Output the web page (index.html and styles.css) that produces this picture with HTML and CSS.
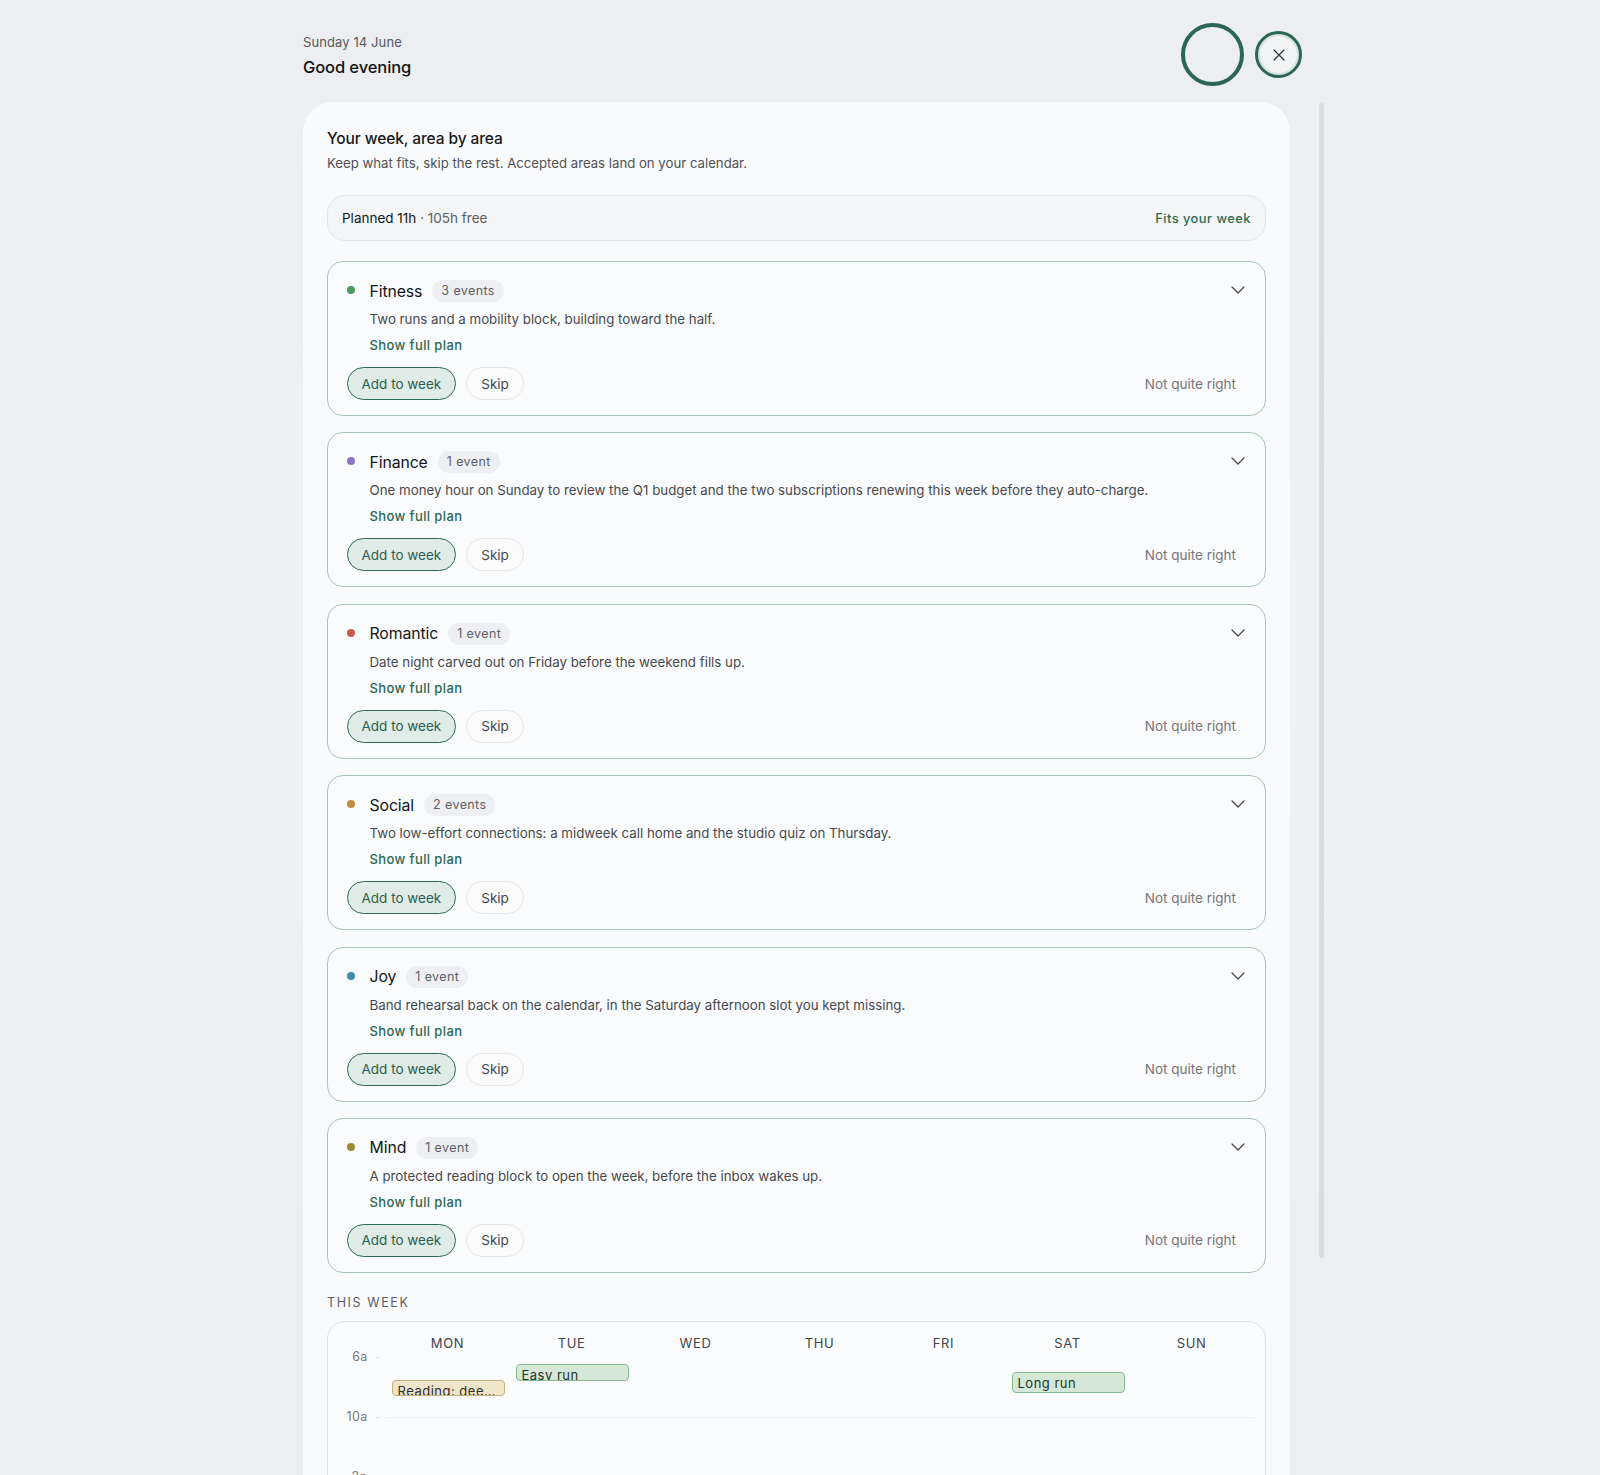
FILE: index.html
```html
<!DOCTYPE html>
<html lang="en">
<head>
<meta charset="utf-8">
<title>Your week</title>
<link rel="stylesheet" href="styles.css">
</head>
<body>
<div class="page">
  <header class="topbar">
    <div class="greeting">
      <div class="date">Sunday 14 June</div>
      <div class="hello">Good evening</div>
    </div>
    <div class="top-actions">
      <button class="ring-btn" aria-label="Listening"></button>
      <button class="close-btn" aria-label="Close">
        <svg width="14" height="14" viewBox="0 0 14 14"><path d="M2 2 L12 12 M12 2 L2 12" stroke="#333" stroke-width="1.2" fill="none" stroke-linecap="round"/></svg>
      </button>
    </div>
  </header>

  <div class="content-row">
    <main class="sheet">
      <h1 class="sheet-title">Your week, area by area</h1>
      <p class="sheet-sub">Keep what fits, skip the rest. Accepted areas land on your calendar.</p>

      <div class="summary">
        <span class="summary-main"><strong>Planned 11h</strong> · 105h free</span>
        <span class="summary-fit">Fits your week</span>
      </div>

      <section class="areas">
        <article class="area">
          <div class="area-head">
            <span class="dot dot-fitness"></span>
            <span class="area-name">Fitness</span>
            <span class="badge">3 events</span>
            <svg class="chev" width="14" height="8" viewBox="0 0 14 8"><path d="M1 1 L7 7 L13 1" stroke="#444" stroke-width="1.2" fill="none" stroke-linecap="round" stroke-linejoin="round"/></svg>
          </div>
          <p class="area-desc">Two runs and a mobility block, building toward the half.</p>
          <a class="area-link">Show full plan</a>
          <div class="area-actions">
            <button class="btn btn-add">Add to week</button>
            <button class="btn btn-skip">Skip</button>
            <button class="btn-text">Not quite right</button>
          </div>
        </article>

        <article class="area">
          <div class="area-head">
            <span class="dot dot-finance"></span>
            <span class="area-name">Finance</span>
            <span class="badge">1 event</span>
            <svg class="chev" width="14" height="8" viewBox="0 0 14 8"><path d="M1 1 L7 7 L13 1" stroke="#444" stroke-width="1.2" fill="none" stroke-linecap="round" stroke-linejoin="round"/></svg>
          </div>
          <p class="area-desc">One money hour on Sunday to review the Q1 budget and the two subscriptions renewing this week before they auto-charge.</p>
          <a class="area-link">Show full plan</a>
          <div class="area-actions">
            <button class="btn btn-add">Add to week</button>
            <button class="btn btn-skip">Skip</button>
            <button class="btn-text">Not quite right</button>
          </div>
        </article>

        <article class="area">
          <div class="area-head">
            <span class="dot dot-romantic"></span>
            <span class="area-name">Romantic</span>
            <span class="badge">1 event</span>
            <svg class="chev" width="14" height="8" viewBox="0 0 14 8"><path d="M1 1 L7 7 L13 1" stroke="#444" stroke-width="1.2" fill="none" stroke-linecap="round" stroke-linejoin="round"/></svg>
          </div>
          <p class="area-desc">Date night carved out on Friday before the weekend fills up.</p>
          <a class="area-link">Show full plan</a>
          <div class="area-actions">
            <button class="btn btn-add">Add to week</button>
            <button class="btn btn-skip">Skip</button>
            <button class="btn-text">Not quite right</button>
          </div>
        </article>

        <article class="area">
          <div class="area-head">
            <span class="dot dot-social"></span>
            <span class="area-name">Social</span>
            <span class="badge">2 events</span>
            <svg class="chev" width="14" height="8" viewBox="0 0 14 8"><path d="M1 1 L7 7 L13 1" stroke="#444" stroke-width="1.2" fill="none" stroke-linecap="round" stroke-linejoin="round"/></svg>
          </div>
          <p class="area-desc">Two low-effort connections: a midweek call home and the studio quiz on Thursday.</p>
          <a class="area-link">Show full plan</a>
          <div class="area-actions">
            <button class="btn btn-add">Add to week</button>
            <button class="btn btn-skip">Skip</button>
            <button class="btn-text">Not quite right</button>
          </div>
        </article>

        <article class="area">
          <div class="area-head">
            <span class="dot dot-joy"></span>
            <span class="area-name">Joy</span>
            <span class="badge">1 event</span>
            <svg class="chev" width="14" height="8" viewBox="0 0 14 8"><path d="M1 1 L7 7 L13 1" stroke="#444" stroke-width="1.2" fill="none" stroke-linecap="round" stroke-linejoin="round"/></svg>
          </div>
          <p class="area-desc">Band rehearsal back on the calendar, in the Saturday afternoon slot you kept missing.</p>
          <a class="area-link">Show full plan</a>
          <div class="area-actions">
            <button class="btn btn-add">Add to week</button>
            <button class="btn btn-skip">Skip</button>
            <button class="btn-text">Not quite right</button>
          </div>
        </article>

        <article class="area">
          <div class="area-head">
            <span class="dot dot-mind"></span>
            <span class="area-name">Mind</span>
            <span class="badge">1 event</span>
            <svg class="chev" width="14" height="8" viewBox="0 0 14 8"><path d="M1 1 L7 7 L13 1" stroke="#444" stroke-width="1.2" fill="none" stroke-linecap="round" stroke-linejoin="round"/></svg>
          </div>
          <p class="area-desc">A protected reading block to open the week, before the inbox wakes up.</p>
          <a class="area-link">Show full plan</a>
          <div class="area-actions">
            <button class="btn btn-add">Add to week</button>
            <button class="btn btn-skip">Skip</button>
            <button class="btn-text">Not quite right</button>
          </div>
        </article>
      </section>

      <h2 class="week-label">THIS WEEK</h2>
      <div class="cal">
        <div class="cal-head">
          <span></span>
          <span>MON</span><span>TUE</span><span>WED</span><span>THU</span><span>FRI</span><span>SAT</span><span>SUN</span>
        </div>
        <div class="cal-body">
          <div class="cal-gutter">
            <div class="slot"><span>6a</span></div>
            <div class="slot"><span>10a</span></div>
            <div class="slot"><span>2p</span></div>
          </div>
          <div class="cal-days">
            <div class="cal-lines">
              <div class="line-row"></div>
              <div class="line-row"></div>
              <div class="line-row"></div>
            </div>
            <div class="day">
              <div class="ev ev-tan" style="top:23px;height:16px">Reading: dee…</div>
            </div>
            <div class="day">
              <div class="ev ev-green" style="top:7px;height:17px">Easy run</div>
            </div>
            <div class="day"></div>
            <div class="day"></div>
            <div class="day"></div>
            <div class="day">
              <div class="ev ev-green ev-tall" style="top:15px;height:21px">Long run</div>
            </div>
            <div class="day"></div>
          </div>
        </div>
      </div>
    </main>
    <div class="scroll-thumb"></div>
  </div>
</div>
</body>
</html>
```

FILE: styles.css
```css
* { box-sizing: border-box; }

html, body {
  margin: 0;
  padding: 0;
}

body {
  width: 1600px;
  height: 1475px;
  overflow: hidden;
  font-family: Inter, "Liberation Sans", sans-serif;
  color: #1c1d1f;
  background:
    radial-gradient(ellipse 900px 700px at 800px 650px, #f3f4f6 0%, rgba(243,244,246,0) 100%),
    #eceef1;
}

.page {
  padding-left: 303px;
}

/* ---------- top bar ---------- */
.topbar {
  width: 999px;
  margin-top: 23px;
  display: flex;
  justify-content: space-between;
  align-items: flex-start;
}

.greeting { padding-top: 10px; }

.date {
  font-size: 13px;
  line-height: 18px;
  color: #55575b;
  letter-spacing: 0.1px;
}

.hello {
  margin-top: 4px;
  font-size: 16.5px;
  line-height: 24px;
  font-weight: 500;
  color: #111315;
  letter-spacing: -0.1px;
}

.top-actions {
  display: flex;
  align-items: center;
  gap: 11px;
}

.ring-btn {
  width: 63px;
  height: 63px;
  border-radius: 50%;
  border: 4px solid #2a6652;
  background: transparent;
  padding: 0;
}

.close-btn {
  width: 47px;
  height: 47px;
  border-radius: 50%;
  border: 3px solid #2a6652;
  background: #f1f3f4;
  box-shadow: inset 0 0 0 2px #d3e2dc;
  padding: 0;
  display: flex;
  align-items: center;
  justify-content: center;
}

/* ---------- sheet ---------- */
.content-row {
  display: flex;
  align-items: flex-start;
  margin-top: 16px;
}

.sheet {
  width: 987px;
  height: 1400px;
  background: #f9fafc;
  border-radius: 30px 30px 0 0;
  padding: 26px 24px 0;
  box-shadow: 0 1px 2px rgba(30, 40, 50, 0.03);
}

.scroll-thumb {
  width: 5px;
  height: 1155px;
  margin-left: 29px;
  margin-top: 1px;
  border-radius: 3px;
  background: #dcdde0;
}

.sheet-title {
  margin: 0;
  font-size: 15.5px;
  line-height: 22px;
  font-weight: 500;
  color: #17181a;
  letter-spacing: -0.1px;
}

.sheet-sub {
  margin: 3px 0 0;
  font-size: 13.2px;
  line-height: 20px;
  color: #505256;
}

.summary {
  margin-top: 22px;
  height: 46px;
  border: 1.5px solid #e3e5e8;
  border-radius: 18px;
  background: #f4f5f7;
  display: flex;
  align-items: center;
  justify-content: space-between;
  padding: 0 14px 0 14px;
  font-size: 13.5px;
  color: #5a5c60;
}

.summary-main strong {
  font-weight: 400;
  color: #151618;
}

.summary-fit {
  color: #2b6a52;
  font-weight: 500;
  font-size: 12.8px;
  letter-spacing: 0.5px;
}

/* ---------- area cards ---------- */
.areas {
  margin-top: 20px;
  display: flex;
  flex-direction: column;
  gap: 16.4px;
}

.area {
  height: 155px;
  border: 1.5px solid #a8c5ba;
  border-radius: 16px;
  background: #fafbfd;
  padding: 16px 18px 0 18.5px;
}

.area-head {
  display: flex;
  align-items: center;
  height: 26px;
}

.dot {
  width: 8px;
  height: 8px;
  border-radius: 50%;
  margin-right: 15px;
  margin-top: -2px;
  flex: none;
}

.dot-fitness { background: #4f995f; }
.dot-finance { background: #8d73c4; }
.dot-romantic { background: #c85a4c; }
.dot-social { background: #c28d3d; }
.dot-joy { background: #3e8cab; }
.dot-mind { background: #a08a30; }

.area-name {
  font-size: 15.8px;
  font-weight: 400;
  color: #151618;
  letter-spacing: -0.1px;
}

.badge {
  margin-left: 10px;
  height: 22px;
  line-height: 22px;
  padding: 0 9px;
  border-radius: 11px;
  background: #eeeff2;
  font-size: 12.5px;
  color: #5e6064;
  letter-spacing: 0.4px;
}

.chev {
  margin-left: auto;
  margin-right: 2px;
  margin-top: -2px;
}

.area-desc {
  margin: 5px 0 0 23px;
  font-size: 13.3px;
  line-height: 20px;
  color: #47494d;
}

.area-link {
  display: block;
  margin: 6px 0 0 23px;
  font-size: 13px;
  line-height: 20px;
  font-weight: 500;
  color: #2d6853;
  letter-spacing: 0.4px;
}

.area-actions {
  display: flex;
  align-items: center;
  gap: 10px;
  margin-top: 12px;
}

.btn {
  height: 33px;
  border-radius: 17px;
  font-family: inherit;
  font-size: 13.5px;
  padding: 0 14px;
}

.btn-add {
  background: #dfece7;
  border: 1.5px solid #2d6a55;
  color: #2d5d4c;
}

.btn-skip {
  background: #fbfbfc;
  border: 1.5px solid #e4e6e8;
  color: #45474b;
}

.btn-text {
  margin-left: auto;
  margin-right: 11px;
  background: none;
  border: none;
  padding: 0;
  font-family: inherit;
  font-size: 13.5px;
  color: #74767a;
}

/* ---------- week calendar ---------- */
.week-label {
  margin: 22px 0 0;
  font-size: 12.5px;
  line-height: 16px;
  font-weight: 400;
  letter-spacing: 1.6px;
  color: #5c5e62;
}

.cal {
  margin-top: 10px;
  height: 300px;
  border: 1.5px solid #dfe1e4;
  border-radius: 18px;
  background: #fafbfc;
  padding-top: 12px;
}

.cal-head {
  display: grid;
  grid-template-columns: 57.5px repeat(7, 124px);
  font-size: 13px;
  line-height: 18px;
  letter-spacing: 0.6px;
  color: #424448;
  text-align: center;
}

.cal-body {
  margin-top: 5px;
  display: flex;
}

.cal-gutter {
  width: 57.5px;
  flex: none;
}

.slot {
  height: 60px;
  display: flex;
  justify-content: flex-end;
  padding-right: 6px;
}

.slot span {
  display: block;
  margin-top: -8px;
  height: 16px;
  font-size: 12.5px;
  line-height: 16px;
  color: #77797d;
  letter-spacing: 0.3px;
  position: relative;
  padding-right: 12px;
}

/* small tick beside each hour label */
.slot span::after {
  content: "";
  position: absolute;
  right: 0;
  top: 8px;
  width: 4px;
  height: 1px;
  background: #dcdee1;
}

.cal-days {
  position: relative;
  display: grid;
  grid-template-columns: repeat(7, 124px);
  height: 180px;
}

.cal-lines {
  position: absolute;
  inset: 0;
  display: flex;
  flex-direction: column;
}

.line-row {
  height: 60px;
  flex: none;
}

.line-row + .line-row {
  border-top: 1px solid #eff0f3;
}

.day {
  position: relative;
}

.ev {
  position: absolute;
  left: 6px;
  right: 5px;
  border-radius: 4px;
  border: 1px solid;
  overflow: hidden;
  padding: 2px 5px 0;
  font-size: 13px;
  line-height: 16px;
  letter-spacing: 0.5px;
  white-space: nowrap;
}

.ev-tall { padding-top: 2px; }

.ev-tan {
  background: #efe5c9;
  border-color: #c6b07a;
  color: #2e2a1d;
}

.ev-green {
  background: #d5e8d7;
  border-color: #86b890;
  color: #1f3325;
}
```
